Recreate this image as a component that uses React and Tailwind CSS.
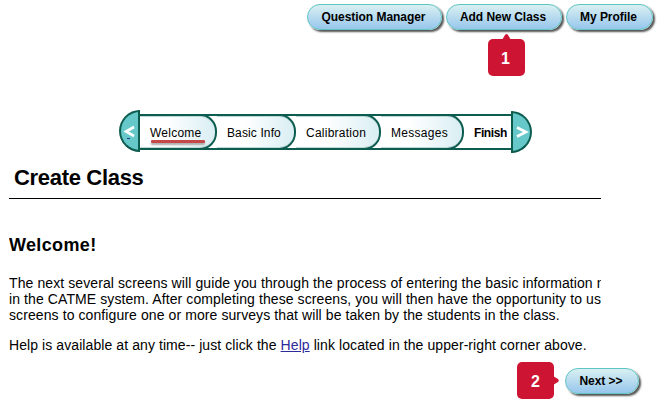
const pill =
  "flex h-[26px] items-center justify-center whitespace-nowrap rounded-full border border-[#5fc4c4] bg-gradient-to-b from-[#d9f0f1] to-[#97c6ec] pr-[2px] text-[12px] font-bold tracking-[-0.05px] text-black shadow-[2px_2px_2px_#555]";

function Step({ label, className }) {
  return (
    <div
      className={`h-full rounded-r-[17px] border-2 border-l-0 border-[#0d5c50] bg-gradient-to-r from-white from-35% to-[#d9eef3] pl-[10px] text-[12px] leading-[34px] whitespace-nowrap shadow-[inset_0_1px_0_#bcd9d8,inset_0_-1px_0_#bcd9d8] ${className}`}
    >
      {label}
    </div>
  );
}

export default function App() {
  return (
    <div className="flex h-[400px] w-[658px] flex-col overflow-hidden bg-white font-['Liberation_Sans',Arial,sans-serif] text-black">
      <header className="flex h-[110px] shrink-0 justify-end gap-[4px] pt-[4px] pr-[5px]">
        <button className={`${pill} w-[135px]`}>Question Manager</button>
        <div className="relative h-[26px]">
          <button className={`${pill} w-[116px]`}>Add New Class</button>
          <div className="absolute top-[35px] left-[42px] flex size-[37px] items-center justify-center rounded-[5px] bg-[#ce1433] text-[16px] font-bold text-white">
            <svg className="absolute -top-[5px] left-[14px]" width="9" height="6" viewBox="0 0 9 6">
              <path d="M0 6L3 1Q4.500 -1 6 1L9 6Z" fill="#ce1433" />
            </svg>
            <span className="-translate-x-px translate-y-px">1</span>
          </div>
        </div>
        <button className={`${pill} w-[87px]`}>My Profile</button>
      </header>

      <nav className="ml-[119px] flex h-[43px] shrink-0 items-start">
        <div className="flex h-[42px] w-[21px] items-center justify-center rounded-l-full border-2 border-[#0d5c50] bg-[#66c8c8]">
          <svg className="shrink-0" width="17" height="20" viewBox="0 0 17 20">
            <path d="M13 6L5 10.500L13 15" fill="none" stroke="white" strokeWidth="2.600" />
            <path d="M6 17.500H9" stroke="#223a9a" />
          </svg>
        </div>
        <div className="mt-[4px] flex h-[36px] w-[371px] border-y-2 border-[#0d5c50]">
          <div className="-my-[2px] flex h-[36px]">
            <div className="relative">
              <Step label="Welcome" className="w-[77px] tracking-[0.25px]" />
              <div className="absolute top-[26px] left-[11px] h-[3px] w-[54px] rounded-[1px] bg-[#c5484b] shadow-[0_2px_2px_#aaa]" />
            </div>
            <Step label="Basic Info" className="w-[79px] tracking-[0.12px]" />
            <Step label="Calibration" className="w-[85px] tracking-[0.25px]" />
            <Step label="Messages" className="w-[83px] tracking-[0.3px]" />
            <div className="w-[47px] pl-[10px] text-[12px] leading-[38px] font-bold tracking-[-0.4px]">Finish</div>
          </div>
        </div>
        <div className="mt-px flex h-[42px] w-[21px] items-center justify-center rounded-r-full border-2 border-[#0d5c50] bg-[#66c8c8]">
          <svg className="shrink-0" width="17" height="20" viewBox="0 0 17 20">
            <path d="M4 5.500L13 10L4 14.500" fill="none" stroke="white" strokeWidth="2.600" />
          </svg>
        </div>
      </nav>

      <main className="ml-[9px] w-[592px] shrink-0 overflow-hidden whitespace-nowrap">
        <h1 className="flex h-[46px] items-center border-b border-black pt-[3px] pl-[5px] text-[22px] font-bold tracking-[-0.32px]">Create Class</h1>
        <h2 className="mt-[34px] text-[18px] leading-[24px] font-bold tracking-[0.35px]">Welcome!</h2>
        <p className="mt-[18px] text-[14px] leading-[16px] tracking-[0.093px]">
          The next several screens will guide you through the process of entering the basic information needed
          <br />
          in the CATME system. After completing these screens, you will then have the opportunity to us
          <br />
          screens to configure one or more surveys that will be taken by the students in the class.
        </p>
        <p className="mt-[14px] text-[14px] leading-[16px] tracking-[0.083px]">
          Help is available at any time-- just click the{" "}
          <a className="text-[#2b2b99] underline">Help</a> link located in the upper-right corner above.
        </p>
      </main>

      <footer className="mt-[9px] flex shrink-0 items-start justify-end gap-[11px] pr-[19px]">
        <div className="relative flex size-[37px] items-center justify-center rounded-[5px] bg-[#ce1433] text-[16px] font-bold text-white">
          <span className="translate-y-px">2</span>
          <svg className="absolute top-[14px] -right-[5px]" width="6" height="9" viewBox="0 0 6 9">
            <path d="M0 0L5 3Q6.500 4.500 5 6L0 9Z" fill="#ce1433" />
          </svg>
        </div>
        <button className={`${pill} mt-[6px] w-[74px]`}>Next &gt;&gt;</button>
      </footer>
    </div>
  );
}
